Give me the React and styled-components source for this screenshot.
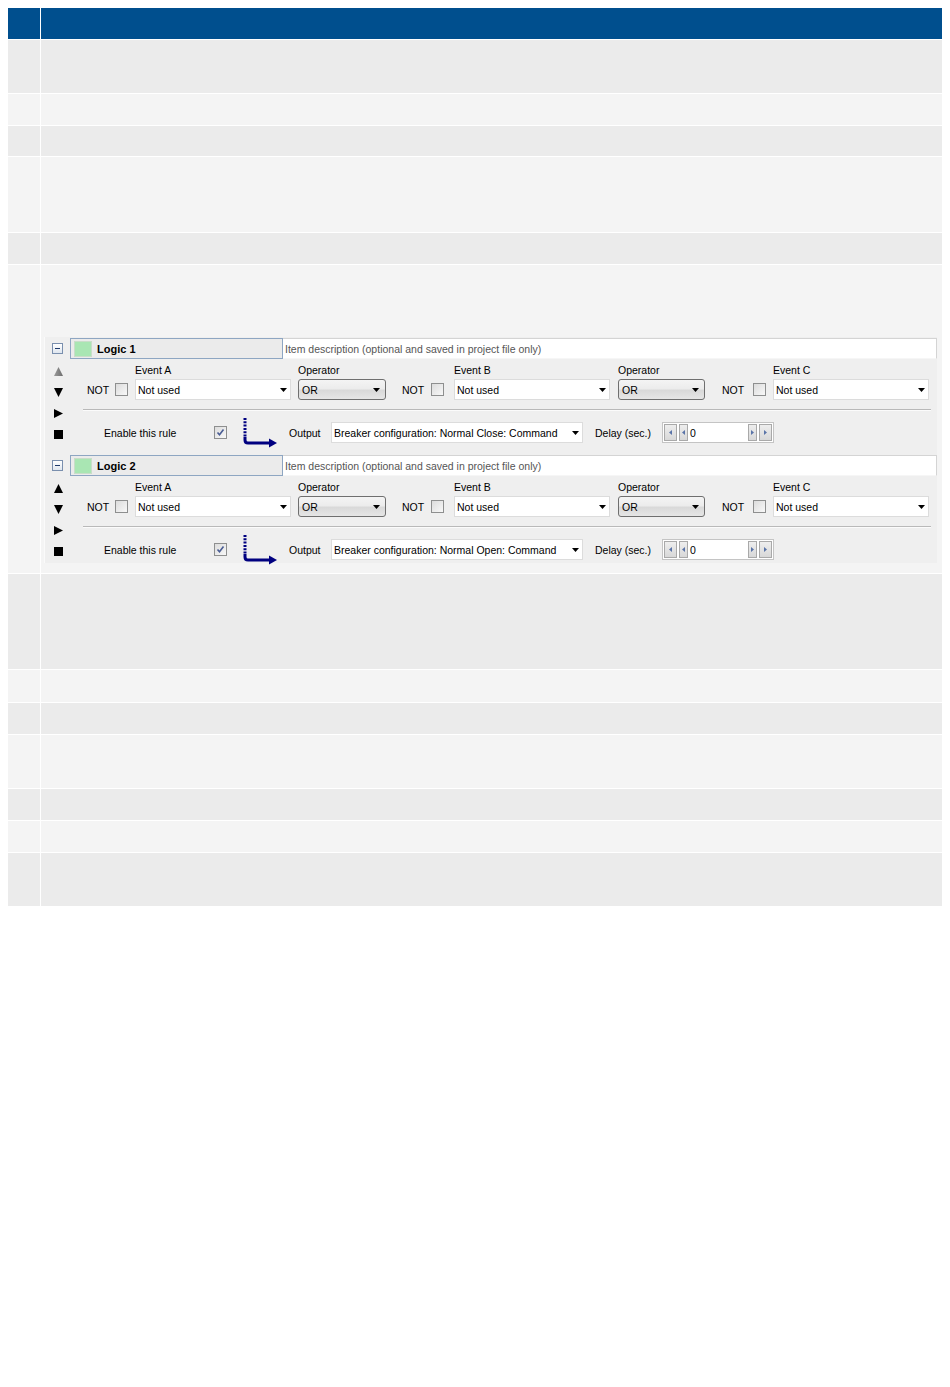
import React from 'react';
import styled, { createGlobalStyle } from 'styled-components';

const Global = createGlobalStyle`
  html, body { margin: 0; padding: 0; background: #fff; }
  body { font-family: "Liberation Sans", Arial, sans-serif; font-size: 10.5px; color: #000; }
`;

const Page = styled.div`
  padding: 8px;
  width: 934px;
`;

const Table = styled.div`
  display: flex;
  flex-direction: column;
  gap: 1px;
  background: #fff;
`;

const Row = styled.div`
  display: grid;
  grid-template-columns: 32px 1fr;
  column-gap: 1px;
  min-height: ${p => p.$h}px;
`;

const Cell = styled.div`
  background: ${p => p.$bg};
`;

const PanelCell = styled(Cell)`
  padding: 72px 5px 10px 3px;
`;

const Panel = styled.div`
  background: #efefef;
  border-left: 1px solid #fafafa;
  padding: 1px 0 1px 0;
  display: flex;
  flex-direction: column;
  gap: 10px;
`;

const Block = styled.div`
  padding-bottom: 2px;
`;

const Header = styled.div`
  display: flex;
  align-items: center;
  height: 21px;
`;

const Toggle = styled.div`
  width: 9px;
  height: 9px;
  margin: 0 7px 0 7px;
  border: 1px solid #7a8fae;
  background: linear-gradient(#ffffff, #dfe6ef);
  position: relative;
  &::after {
    content: '';
    position: absolute;
    left: 2px;
    top: 4px;
    width: 5px;
    height: 1px;
    background: #1f3a6b;
  }
`;

const NameBox = styled.div`
  box-sizing: border-box;
  width: 213px;
  height: 21px;
  border: 1px solid #8ea6c2;
  background: #ebebeb;
  display: flex;
  align-items: center;
  padding-left: 3px;
  gap: 5px;
  font-weight: bold;
  font-size: 11px;
`;

const Swatch = styled.div`
  box-sizing: border-box;
  width: 18px;
  height: 16px;
  background: #a9e6b3;
  border: 1px solid #c9ddc9;
`;

const Desc = styled.div`
  flex: 1;
  box-sizing: border-box;
  height: 21px;
  background: #fff;
  border-top: 1px solid #d4d4d4;
  border-right: 1px solid #d4d4d4;
  border-bottom: 1px solid #f6f6f6;
  display: flex;
  align-items: center;
  padding-left: 2px;
  color: #555;
`;

const Body = styled.div`
  display: flex;
`;

const Arrows = styled.div`
  width: 38px;
  box-sizing: border-box;
  padding: 8px 0 0 9px;
  display: flex;
  flex-direction: column;
  gap: 12px;
`;

const Arrow = styled.svg`
  display: block;
  width: 9px;
  height: 9px;
`;

const Content = styled.div`
  width: 848px;
  padding-top: 4px;
`;

const ControlRow = styled.div`
  display: flex;
  align-items: flex-end;
`;

const Field = styled.div`
  display: flex;
  flex-direction: column;
  gap: 2px;
  margin-left: ${p => p.$ml || 0}px;
  width: ${p => p.$w}px;
`;

const Label = styled.div`
  height: 14px;
  line-height: 14px;
`;

const NotLabel = styled.div`
  height: 21px;
  line-height: 22px;
  margin-left: ${p => p.$ml || 0}px;
  width: 20px;
`;

const Check = styled.div`
  box-sizing: border-box;
  width: 13px;
  height: 13px;
  margin-left: ${p => p.$ml || 0}px;
  margin-bottom: ${p => p.$mb ?? 4}px;
  border: 1px solid #8e8f8f;
  background: linear-gradient(135deg, #dcdcdc, #f8f8f8);
  display: flex;
  align-items: center;
  justify-content: center;
`;

const Combo = styled.div`
  box-sizing: border-box;
  height: 21px;
  width: ${p => p.$w ? `${p.$w}px` : '100%'};
  background: #fff;
  border: 1px solid #dcdcdc;
  display: flex;
  align-items: center;
  justify-content: space-between;
  padding: 0 3px 0 2px;
  flex-shrink: 0;
`;

const OpCombo = styled(Combo)`
  border: 1px solid #6f6f6f;
  border-radius: 3px;
  background: linear-gradient(#f4f4f4 0%, #ececec 45%, #d9d9d9 55%, #e6e6e6 100%);
  padding: 0 5px 0 3px;
`;

const Caret = () => (
  <svg width="7" height="4" viewBox="0 0 7 4"><path d="M0 0H7L3.5 4Z" fill="#000" /></svg>
);

const Separator = styled.div`
  margin: 9px 0 0 0;
  height: 1px;
  background: #b9b9b9;
  border-bottom: 1px solid #fbfbfb;
`;

const SecondRow = styled.div`
  display: flex;
  align-items: center;
  margin-top: 11px;
  height: 21px;
`;

const Text = styled.div`
  margin-left: ${p => p.$ml || 0}px;
  width: ${p => p.$w ? `${p.$w}px` : 'auto'};
  flex-shrink: 0;
`;

const FlowIcon = styled.svg`
  margin-left: ${p => p.$ml || 0}px;
  display: block;
  flex-shrink: 0;
`;

const Spinner = styled.div`
  box-sizing: border-box;
  width: 112px;
  height: 21px;
  margin-left: ${p => p.$ml || 0}px;
  border: 1px solid #c4c4c4;
  background: #fff;
  display: flex;
  align-items: center;
  padding: 1px;
  gap: 2px;
`;

const SpinBtn = styled.div`
  box-sizing: border-box;
  width: ${p => p.$w}px;
  height: 17px;
  background: linear-gradient(#eeeeee, #d8d8d8);
  border: 1px solid #a9a9a9;
  display: flex;
  align-items: center;
  justify-content: center;
`;

const SpinValue = styled.div`
  flex: 1;
`;

const Tri = ({ dir }) => (
  <svg width="3" height="5" viewBox="0 0 3 5">
    <path d={dir === 'l' ? 'M3 0V5L0 2.5Z' : 'M0 0V5L3 2.5Z'} fill="#5a74a8" />
  </svg>
);

const CheckMark = () => (
  <svg width="9" height="9" viewBox="0 0 9 9">
    <path d="M1.5 4.5L3.5 6.8L7.5 1.5" stroke="#4a5d94" strokeWidth="1.6" fill="none" />
  </svg>
);

const UpArrow = ({ disabled }) => (
  <Arrow viewBox="0 0 9 9">
    <defs>
      <linearGradient id="gup" x1="0" x2="1">
        <stop offset="0" stopColor="#9a9a9a" />
        <stop offset="1" stopColor="#6e6e6e" />
      </linearGradient>
    </defs>
    <path d="M4.5 0L9 9H0Z" fill={disabled ? 'url(#gup)' : '#000'} />
  </Arrow>
);

const DownArrow = () => (
  <Arrow viewBox="0 0 9 9"><path d="M0 0H9L4.5 9Z" fill="#000" /></Arrow>
);

const RightArrow = () => (
  <Arrow viewBox="0 0 9 9"><path d="M0 0L9 4.5L0 9Z" fill="#000" /></Arrow>
);

const Square = () => (
  <Arrow viewBox="0 0 9 9"><rect x="0" y="0" width="9" height="9" fill="#000" /></Arrow>
);

const Flow = () => (
  <FlowIcon $ml={15} width="36" height="30" viewBox="0 0 36 30">
    <path d="M3 0V19" stroke="#000080" strokeWidth="3" strokeDasharray="2 1.3" fill="none" />
    <path d="M3 19V22Q3 25 6 25H28" stroke="#000080" strokeWidth="3" fill="none" />
    <path d="M27 20.5L35 25L27 29.5Z" fill="#000080" />
  </FlowIcon>
);

const EventGroup = ({ label, notMl, checkMl, fieldMl }) => (
  <>
    <NotLabel $ml={notMl}>NOT</NotLabel>
    <Check $ml={checkMl} />
    <Field $ml={fieldMl} $w={156}>
      <Label>{label}</Label>
      <Combo><span>Not used</span><Caret /></Combo>
    </Field>
  </>
);

const OperatorField = ({ ml, w }) => (
  <Field $ml={ml} $w={w}>
    <Label>Operator</Label>
    <OpCombo><span>OR</span><Caret /></OpCombo>
  </Field>
);

const LogicBlock = ({ name, first, output }) => (
  <Block>
    <Header>
      <Toggle />
      <NameBox><Swatch />{name}</NameBox>
      <Desc>Item description (optional and saved in project file only)</Desc>
    </Header>
    <Body>
      <Arrows>
        <UpArrow disabled={first} />
        <DownArrow />
        <RightArrow />
        <Square />
      </Arrows>
      <Content>
        <ControlRow>
          <EventGroup label="Event A" notMl={4} checkMl={8} fieldMl={7} />
          <OperatorField ml={7} w={88} />
          <EventGroup label="Event B" notMl={16} checkMl={9} fieldMl={10} />
          <OperatorField ml={8} w={87} />
          <EventGroup label="Event C" notMl={17} checkMl={11} fieldMl={7} />
        </ControlRow>
        <Separator />
        <SecondRow>
          <Text $ml={21} $w={110}>Enable this rule</Text>
          <Check $mb={0}><CheckMark /></Check>
          <Flow />
          <Text $ml={11} $w={42}>Output</Text>
          <Combo $w={252}><span>{output}</span><Caret /></Combo>
          <Text $ml={12} $w={67}>Delay (sec.)</Text>
          <Spinner>
            <SpinBtn $w={13}><Tri dir="l" /></SpinBtn>
            <SpinBtn $w={9}><Tri dir="l" /></SpinBtn>
            <SpinValue>0</SpinValue>
            <SpinBtn $w={9}><Tri dir="r" /></SpinBtn>
            <SpinBtn $w={13}><Tri dir="r" /></SpinBtn>
          </Spinner>
        </SecondRow>
      </Content>
    </Body>
  </Block>
);

const heights = [53, 31, 30, 75, 31, null, 95, 32, 31, 53, 31, 31, 53];

export default function App() {
  return (
    <Page>
      <Global />
      <Table>
        <Row $h={31}>
          <Cell $bg="#004f8e" />
          <Cell $bg="#004f8e" />
        </Row>
        {heights.map((h, i) => {
          const bg = i % 2 === 0 ? '#ebebeb' : '#f4f4f4';
          if (h === null) {
            return (
              <Row key={i}>
                <Cell $bg={bg} />
                <PanelCell $bg={bg}>
                  <Panel>
                    <LogicBlock name="Logic 1" first output="Breaker configuration: Normal Close: Command" />
                    <LogicBlock name="Logic 2" output="Breaker configuration: Normal Open: Command" />
                  </Panel>
                </PanelCell>
              </Row>
            );
          }
          return (
            <Row key={i} $h={h}>
              <Cell $bg={bg} />
              <Cell $bg={bg} />
            </Row>
          );
        })}
      </Table>
    </Page>
  );
}
